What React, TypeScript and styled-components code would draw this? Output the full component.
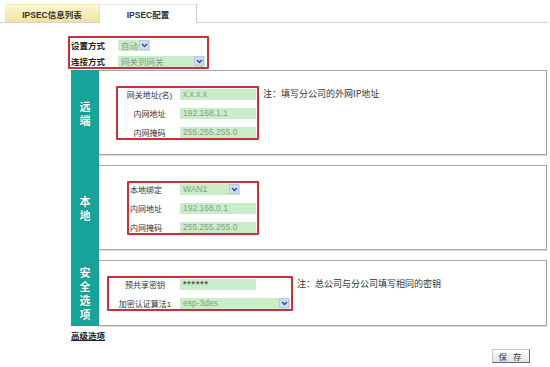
import React from 'react';
import styled, { createGlobalStyle } from 'styled-components';

const GlobalStyle = createGlobalStyle`
    body {
        margin: 0;
        background: #ffffff;
        font-family: "Liberation Sans", "Noto Sans CJK SC", sans-serif;
        color: #333333;
    }
`;

const Page = styled.div`
    width: 550px;
    height: 367px;
    padding-top: 4px;
    box-sizing: border-box;
    overflow: hidden;
`;

const TabBar = styled.div`
    display: flex;
    height: 19px;
    padding-left: 5px;
    margin-right: 2px;
    border-bottom: 1px solid #d4d4d4;
    box-sizing: border-box;
`;

const Tab = styled.div<{ $active?: boolean }>`
    width: ${(p) => (p.$active ? '97px' : '95px')};
    height: ${(p) => (p.$active ? '19px' : '18px')};
    display: flex;
    align-items: center;
    justify-content: center;
    font-size: 8.5px;
    font-weight: bold;
    color: #333;
    box-sizing: border-box;
    background: ${(p) =>
        p.$active ? '#ffffff' : 'linear-gradient(#fdf7d2, #f1e29b)'};
    border-top: 1px solid ${(p) => (p.$active ? '#e6e6e6' : '#f4ebb8')};
    border-right: 1px solid ${(p) => (p.$active ? '#cccccc' : '#eee2a8')};
`;

const Form = styled.div`
    padding-left: 68px;
    margin-top: 13px;
`;

const ModeBox = styled.div`
    width: 141px;
    box-sizing: border-box;
    border: 2px solid #c8303a;
    border-radius: 1px;
    padding: 1px 0 0 1px;
    display: flex;
    flex-direction: column;
    gap: 4px;
`;

const Row = styled.div`
    height: 12px;
    display: flex;
    align-items: center;
`;

const ModeLabel = styled.div`
    width: 47px;
    font-size: 8.5px;
    font-weight: bold;
    color: #222;
`;

const Sections = styled.div`
    margin: 1px 0 0 3px;
    width: 476px;
    display: grid;
    grid-template-columns: 28px 1fr;
    row-gap: 10px;
    background: linear-gradient(to right, #17a39a 28px, transparent 28px);
`;

const SideLabel = styled.div`
    display: flex;
    align-items: center;
    justify-content: center;
    color: #ffffff;
    font-size: 11px;
    font-weight: bold;
    line-height: 14px;
    font-family: "Noto Sans CJK SC", sans-serif;
`;

const SideText = styled.div`
    width: 11px;
    word-break: break-all;
    text-align: center;
    text-shadow: 0 0 1px rgba(0, 80, 70, 0.5);
`;

const Panel = styled.div<{ $indent: number }>`
    border-top: 1px solid #a8a8a8;
    border-right: 1px solid #a0a0a0;
    border-bottom: 1px solid #a8a8a8;
    box-shadow: 0 1px 0 #dcdcdc;
    padding: 15px 0 14px ${(p) => p.$indent}px;
    display: flex;
    align-items: flex-start;
`;

const RedBox = styled.div`
    border: 2px solid #c8303a;
    border-radius: 1px;
    padding: 0 1px 0 1px;
    display: flex;
    flex-direction: column;
    gap: 7px;
`;

const FieldLabel = styled.div<{ $width: number; $align: string }>`
    width: ${(p) => p.$width}px;
    text-align: ${(p) => p.$align};
    font-size: 8px;
    color: #333;
    white-space: nowrap;
`;

const Input = styled.input<{ $width?: number; $dark?: boolean }>`
    width: ${(p) => p.$width || 76}px;
    height: 11px;
    box-sizing: border-box;
    border: none;
    outline: none;
    padding: 0 3px;
    margin: 0;
    background: #c9ecc9;
    font-family: "Liberation Sans", sans-serif;
    font-size: 8.5px;
    font-weight: ${(p) => (p.$dark ? 'bold' : 'normal')};
    color: ${(p) => (p.$dark ? '#555' : '#8a9f8a')};
    letter-spacing: ${(p) => (p.$dark ? '1px' : '0')};
`;

const SelectBox = styled.div<{ $width: number }>`
    width: ${(p) => p.$width}px;
    height: 11px;
    display: flex;
    align-items: center;
    background: #c9ecc9;
    box-sizing: border-box;
`;

const SelectValue = styled.div`
    flex: 1;
    padding-left: 3px;
    font-size: 8.5px;
    color: #86a086;
    font-family: "Liberation Sans", "Noto Sans CJK SC", sans-serif;
    white-space: nowrap;
    overflow: hidden;
`;

const ArrowBox = styled.div`
    width: 10px;
    height: 10px;
    margin-right: 1px;
    background: #d2dbf4;
    border: 1px solid #b8c5ea;
    box-sizing: border-box;
    display: flex;
    align-items: center;
    justify-content: center;
`;

const Note = styled.div`
    margin: 2px 0 0 4px;
    font-size: 9px;
    line-height: 12px;
    color: #333;
    font-family: "Noto Sans CJK SC", sans-serif;
`;

const Advanced = styled.a`
    display: block;
    margin: 3px 0 0 3px;
    font-size: 8.5px;
    line-height: 12px;
    font-weight: bold;
    color: #222;
    text-decoration: underline;
    font-family: "Noto Sans CJK SC", sans-serif;
`;

const Footer = styled.div`
    display: flex;
    justify-content: flex-end;
    padding-right: 20px;
    margin-top: 8px;
`;

const SaveButton = styled.button`
    width: 38px;
    height: 14px;
    padding: 0;
    font-size: 8.5px;
    letter-spacing: 2px;
    color: #333;
    font-family: "Noto Sans CJK SC", sans-serif;
    background: linear-gradient(#ffffff, #e4e4e4);
    border: 1px solid;
    border-color: #c8c8c8 #666666 #666666 #c8c8c8;
    line-height: 12px;
`;

const Select = ({ width, value }: { width: number; value: string }) => (
    <SelectBox $width={width}>
        <SelectValue>{value}</SelectValue>
        <ArrowBox>
            <svg width="7" height="5" viewBox="0 0 7 5">
                <path d="M1 1 L3.5 3.5 L6 1" fill="none" stroke="#2b4aa3" strokeWidth="1.4" />
            </svg>
        </ArrowBox>
    </SelectBox>
);

type Field = { label: string; value: string; kind?: 'select' | 'password'; width?: number };

const FieldRows = ({ fields, labelWidth, align }: { fields: Field[]; labelWidth: number; align: string }) => (
    <RedBox>
        {fields.map((f) => (
            <Row key={f.label}>
                <FieldLabel $width={labelWidth} $align={align}>
                    {f.label}
                </FieldLabel>
                {f.kind === 'select' ? (
                    <Select width={f.width || 76} value={f.value} />
                ) : (
                    <Input readOnly value={f.value} $width={f.width} $dark={f.kind === 'password'} />
                )}
            </Row>
        ))}
    </RedBox>
);

const App = () => {
    return (
        <Page>
            <GlobalStyle />
            <TabBar>
                <Tab>IPSEC信息列表</Tab>
                <Tab $active>IPSEC配置</Tab>
            </TabBar>
            <Form>
                <ModeBox>
                    <Row>
                        <ModeLabel>设置方式</ModeLabel>
                        <Select width={32} value="自动" />
                    </Row>
                    <Row>
                        <ModeLabel>连接方式</ModeLabel>
                        <Select width={87} value="网关到网关" />
                    </Row>
                </ModeBox>
                <Sections>
                    <SideLabel>
                        <SideText>远端</SideText>
                    </SideLabel>
                    <Panel $indent={17}>
                        <FieldRows
                            labelWidth={61}
                            align="center"
                            fields={[
                                { label: '网关地址(名)', value: 'x.x.x.x' },
                                { label: '内网地址', value: '192.168.1.1' },
                                { label: '内网掩码', value: '255.255.255.0' },
                            ]}
                        />
                        <Note>注：填写分公司的外网IP地址</Note>
                    </Panel>

                    <SideLabel>
                        <SideText>本地</SideText>
                    </SideLabel>
                    <Panel $indent={28}>
                        <FieldRows
                            labelWidth={50}
                            align="left"
                            fields={[
                                { label: '本地绑定', value: 'WAN1', kind: 'select', width: 60 },
                                { label: '内网地址', value: '192.168.0.1' },
                                { label: '内网掩码', value: '255.255.255.0' },
                            ]}
                        />
                    </Panel>

                    <SideLabel>
                        <SideText>安全选项</SideText>
                    </SideLabel>
                    <Panel $indent={8}>
                        <FieldRows
                            labelWidth={70}
                            align="center"
                            fields={[
                                { label: '预共享密钥', value: '******', kind: 'password' },
                                { label: '加密认证算法1', value: 'esp-3des', kind: 'select', width: 110 },
                            ]}
                        />
                        <Note>注：总公司与分公司填写相同的密钥</Note>
                    </Panel>
                </Sections>
                <Advanced>高级选项</Advanced>
            </Form>
            <Footer>
                <SaveButton>保 存</SaveButton>
            </Footer>
        </Page>
    );
};

export default App;
